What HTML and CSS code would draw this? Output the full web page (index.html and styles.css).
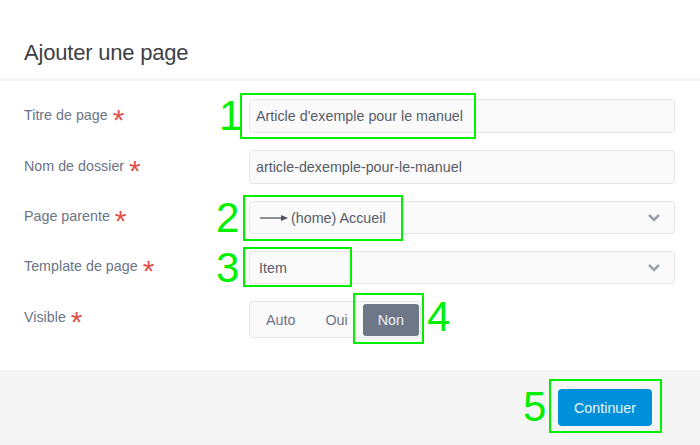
FILE: index.html
```html
<!DOCTYPE html>
<html lang="fr">
<head>
<meta charset="utf-8">
<title>Ajouter une page</title>
<link rel="stylesheet" href="styles.css">
</head>
<body>
<div class="modal">
  <header class="modal-header">
    <h1 class="modal-title">Ajouter une page</h1>
  </header>
  <form class="modal-body">
    <div class="row">
      <label class="label">Titre de page <span class="req">*</span></label>
      <div class="input">Article d'exemple pour le manuel</div>
    </div>
    <div class="row">
      <label class="label">Nom de dossier <span class="req">*</span></label>
      <div class="input">article-dexemple-pour-le-manuel</div>
    </div>
    <div class="row">
      <label class="label">Page parente <span class="req">*</span></label>
      <div class="select">
        <span class="select-value">
          <svg class="tree-arrow" width="29" height="10" viewBox="0 0 29 10"><line x1="0" y1="5" x2="22" y2="5" stroke="#4f5460" stroke-width="1.3"/><polygon points="21,2 28,5 21,8" fill="#4f5460"/></svg>
          (home) Accueil
        </span>
        <svg class="chevron" width="14" height="9" viewBox="0 0 14 9"><polyline points="2,2 7,7 12,2" fill="none" stroke="#9ba2ad" stroke-width="2.6"/></svg>
      </div>
    </div>
    <div class="row">
      <label class="label">Template de page <span class="req">*</span></label>
      <div class="select">
        <span class="select-value">Item</span>
        <svg class="chevron" width="14" height="9" viewBox="0 0 14 9"><polyline points="2,2 7,7 12,2" fill="none" stroke="#9ba2ad" stroke-width="2.6"/></svg>
      </div>
    </div>
    <div class="row row-toggle">
      <label class="label">Visible <span class="req">*</span></label>
      <div class="toggle">
        <span class="toggle-btn">Auto</span>
        <span class="toggle-btn">Oui</span>
        <span class="toggle-btn active">Non</span>
      </div>
    </div>
  </form>
  <footer class="modal-footer">
    <button class="btn-primary" type="button">Continuer</button>
  </footer>

  <div class="ann ann-box box1"></div>
  <div class="ann ann-num num1">1</div>
  <div class="ann ann-box box2"></div>
  <div class="ann ann-num num2">2</div>
  <div class="ann ann-box box3"></div>
  <div class="ann ann-num num3">3</div>
  <div class="ann ann-box box4"></div>
  <div class="ann ann-num num4">4</div>
  <div class="ann ann-box box5"></div>
  <div class="ann ann-num num5">5</div>
</div>
</body>
</html>
```
FILE: styles.css
```css
* { box-sizing: border-box; }
html, body { margin: 0; padding: 0; background: #ffffff; }
body {
  font-family: "Liberation Sans", Arial, sans-serif;
  width: 700px;
  height: 445px;
  overflow: hidden;
}
.modal {
  position: relative;
  width: 700px;
  height: 445px;
  display: flex;
  flex-direction: column;
  background: #fff;
}
.modal-header {
  padding: 40px 24px 12px;
  border-bottom: 3px solid #f3f3f3;
}
.modal-title {
  margin: 0;
  font-size: 22px;
  line-height: 26px;
  font-weight: normal;
  color: #3e3f45;
  letter-spacing: -0.2px;
}
.modal-body {
  margin: 0;
  padding: 18px 25px 0 24px;
  display: flex;
  flex-direction: column;
  gap: 17px;
  flex: 1;
}
.row {
  display: flex;
  align-items: center;
}
.label {
  width: 225px;
  flex: none;
  font-size: 14.3px;
  line-height: 16px;
  color: #6b7486;
  padding-bottom: 3px;
}
.row-toggle .label { padding-bottom: 5px; }
.req {
  color: #e0524b;
  font-size: 30px;
  line-height: 0;
  vertical-align: -10px;
  margin-left: 1px;
}
.input, .select {
  width: 426px;
  height: 34px;
  background: #fafafa;
  border: 1px solid #e6e6e6;
  border-radius: 4px;
  font-size: 14.3px;
  color: #575c68;
  display: flex;
  align-items: center;
  padding: 0 6px;
}
.select {
  height: 33px;
  padding: 0 13px 0 9px;
  justify-content: space-between;
}
.select-value {
  display: flex;
  align-items: center;
  gap: 2px;
}
.tree-arrow { display: block; margin-left: 1px; }
.chevron { display: block; }
.toggle {
  display: flex;
  height: 37px;
  padding: 1px;
  border: 1px solid #e4e4e4;
  border-radius: 4px;
  background: #fafafa;
}
.toggle-btn {
  display: flex;
  align-items: center;
  padding: 0 15px;
  font-size: 14.3px;
  color: #6b7486;
  border-radius: 3px;
}
.toggle-btn.active {
  background: #6d7788;
  color: #f1f3f6;
  margin-top: 1px;
}
.modal-footer {
  height: 75px;
  flex: none;
  background: #f5f5f5;
  display: flex;
  justify-content: flex-end;
  align-items: flex-start;
  padding: 19px 48px 0 0;
}
.btn-primary {
  width: 94px;
  height: 37px;
  border: none;
  border-radius: 4px;
  background: #0090d9;
  color: #eaf5fc;
  font-family: "Liberation Sans", Arial, sans-serif;
  font-size: 14.3px;
  padding: 0;
}

/* annotation overlay */
.ann { position: absolute; }
.ann-box { border: 2px solid #00f000; }
.ann-num {
  font-size: 42px;
  line-height: 42px;
  color: #00f000;
}
.box1 { left: 240px; top: 93px; width: 236px; height: 46px; }
.box2 { left: 243px; top: 195px; width: 160px; height: 46px; }
.box3 { left: 243px; top: 247px; width: 109px; height: 40px; }
.box4 { left: 353px; top: 293px; width: 71px; height: 51px; }
.box5 { left: 549px; top: 379px; width: 113px; height: 54px; }
.num1 { left: 219px; top: 95px; }
.num2 { left: 216px; top: 197px; }
.num3 { left: 216px; top: 247px; }
.num4 { left: 427px; top: 296px; }
.num5 { left: 523px; top: 386px; }
```
